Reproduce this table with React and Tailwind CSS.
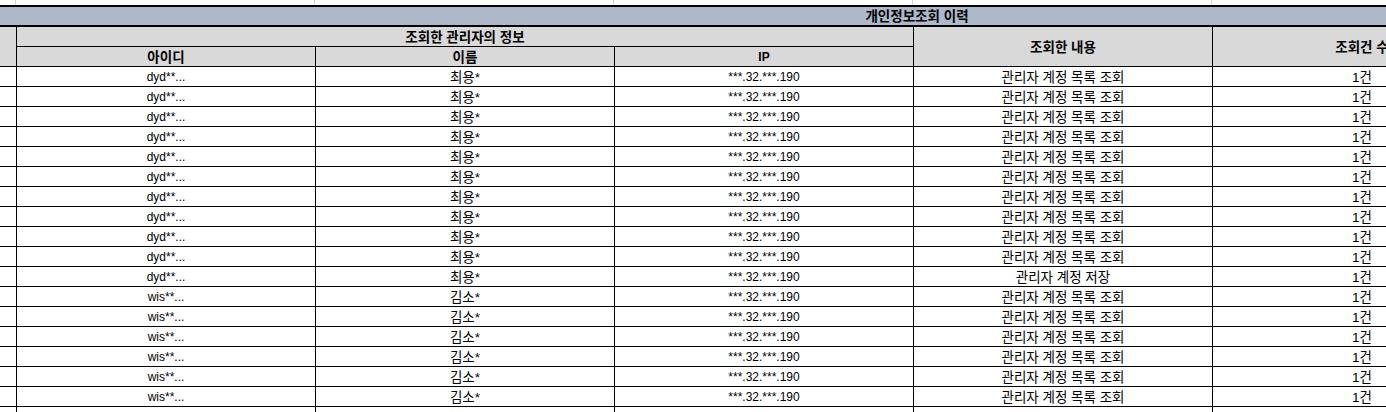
import React from "react";

const rows = [
  ...Array.from({ length: 10 }, () => ["dyd**...", "최용*", "관리자 계정 목록 조회"]),
  ["dyd**...", "최용*", "관리자 계정 저장"],
  ...Array.from({ length: 6 }, () => ["wis**...", "김소*", "관리자 계정 목록 조회"]),
];

const font = { fontFamily: '"Liberation Sans", "Noto Sans CJK KR", sans-serif' };

function K({ children, className = "" }) {
  return <span className={"text-[13.5px] leading-none pt-[2px] " + className}>{children}</span>;
}

export default function App() {
  return (
    <div
      className="w-[1386px] h-[412px] overflow-hidden bg-white text-[12px] text-black leading-none"
      style={font}
    >
      <div className="w-[1600px]">
        {/* top gridline strip */}
        <div className="flex h-[5px]">
          <div className="w-[16px] border-r border-[#d4d4d4]" />
          <div className="w-[299px] border-r border-[#d4d4d4]" />
          <div className="w-[299px] border-r border-[#d4d4d4]" />
          <div className="w-[299px] border-r border-[#d4d4d4]" />
          <div className="w-[299px] border-r border-[#d4d4d4]" />
          <div className="w-[299px] border-r border-[#d4d4d4]" />
        </div>
        <div className="h-[2px] bg-black" />
        {/* title row */}
        <div className="h-[18px] bg-[#adb9ca] flex items-center overflow-hidden">
          <div className="w-[1834px] shrink-0 flex justify-center font-bold">
            <K>개인정보조회 이력</K>
          </div>
        </div>
        <div className="h-[2px] bg-black" />
        {/* table */}
        <div className="grid grid-cols-[16px_298px_298px_298px_298px_298px] auto-rows-[19px] gap-px bg-black">
          <div className="row-span-2 bg-[#d9d9d9]" />
          <div className="col-span-3 bg-[#d9d9d9] flex items-center justify-center font-bold">
            <K>조회한 관리자의 정보</K>
          </div>
          <div className="row-span-2 bg-[#d9d9d9] flex items-center justify-center font-bold">
            <K>조회한 내용</K>
          </div>
          <div className="row-span-2 bg-[#d9d9d9] flex items-center justify-center font-bold">
            <K>조회건 수</K>
          </div>
          <div className="bg-[#d9d9d9] flex items-center justify-center font-bold">
            <K>아이디</K>
          </div>
          <div className="bg-[#d9d9d9] flex items-center justify-center font-bold">
            <K>이름</K>
          </div>
          <div className="bg-[#d9d9d9] flex items-center justify-center font-bold">IP</div>

          {rows.map((r, i) => (
            <React.Fragment key={i}>
              <div className="bg-white" />
              <div className="bg-white flex items-center justify-center">{r[0]}</div>
              <div className="bg-white flex items-center justify-center">
                <K>{r[1]}</K>
              </div>
              <div className="bg-white flex items-center justify-center">***.32.***.190</div>
              <div className="bg-white flex items-center justify-center">
                <K>{r[2]}</K>
              </div>
              <div className="bg-white flex items-center justify-center">
                <K>1건</K>
              </div>
            </React.Fragment>
          ))}
          <div className="bg-white" />
          <div className="bg-white" />
          <div className="bg-white" />
          <div className="bg-white" />
          <div className="bg-white" />
          <div className="bg-white" />
        </div>
      </div>
    </div>
  );
}
